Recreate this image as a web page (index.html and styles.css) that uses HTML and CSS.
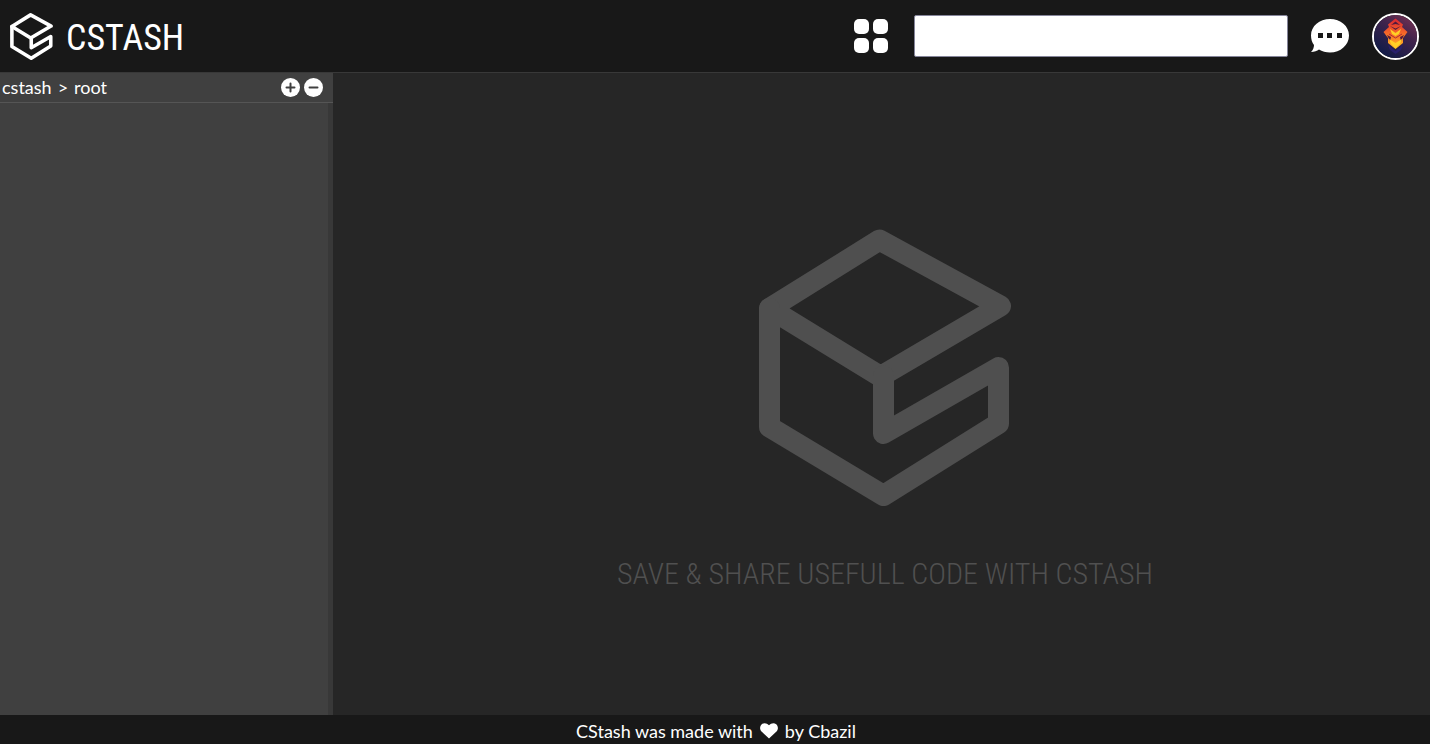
FILE: index.html
```html
<!DOCTYPE html>
<html lang="en">
<head>
<meta charset="utf-8">
<title>CStash</title>
<link rel="stylesheet" href="styles.css">
</head>
<body>
<svg class="sprite" aria-hidden="true">
  <symbol id="cube" viewBox="0 0 252 277">
    <g fill="none" stroke="currentColor" stroke-width="21" stroke-linecap="round" stroke-linejoin="round">
      <path d="M10.500 79.500L120.500 11L241.500 77L121.500 147.500Z"/>
      <path d="M10.500 79.500V198L124.500 266.500L239.500 194.500V138.500L124.500 204.500V147"/>
    </g>
  </symbol>
</svg>
<header class="topbar">
  <a class="brand" href="#">
    <svg class="brand-mark" aria-hidden="true"><use href="#cube"/></svg>
    <span class="brand-name">CSTASH</span>
  </a>
  <div class="tools">
    <button class="icon-button" type="button" aria-label="Categories">
      <svg width="40" height="40" viewBox="0 0 40 40" fill="currentColor"><rect x="3" y="3" width="15" height="15" rx="5"/><rect x="22" y="3" width="15" height="15" rx="5"/><rect x="3" y="22" width="15" height="15" rx="5"/><rect x="22" y="22" width="15" height="15" rx="5"/></svg>
    </button>
    <input class="search" type="search" aria-label="Search">
    <button class="icon-button" type="button" aria-label="Messages">
      <svg width="38" height="34" viewBox="0 0 38 34"><path fill="currentColor" d="M19 0C29.500 0 38 7 38 16.500S29.500 33.500 19 33.500C15 33.500 11 32.500 8 30.500C6 32 3.500 33 0 33C2 31 3 28.500 3 26C1 23.500 0 20 0 16.500C0 7 8.500 0 19 0Z"/><path fill="#181818" d="M7 14h5v5H7zM16 14h5v5h-5zM26 14h5v5h-5z"/></svg>
    </button>
    <button class="icon-button avatar" type="button" aria-label="Profile">
      <svg viewBox="0 0 43 43">
        <defs>
          <linearGradient id="sky" x1="1" y1="0" x2="0.300" y2="1"><stop offset="0" stop-color="#803454"/><stop offset="0.450" stop-color="#40244c"/><stop offset="1" stop-color="#101b48"/></linearGradient>
          <linearGradient id="fire" x1="0" y1="0" x2="0" y2="1"><stop offset="0" stop-color="#d92432"/><stop offset="0.500" stop-color="#f86a28"/><stop offset="1" stop-color="#ffc021"/></linearGradient>
        </defs>
        <rect width="43" height="43" fill="url(#sky)"/>
        <path fill="url(#fire)" d="M21.500 3.500L29 9.500L28 12L33.500 17L29 23V28L21.500 34L14 28V23L9.500 17L15 12L14 9.500Z"/>
        <path fill="#52193d" d="M21.500 6.500L26 10L21.500 9L17 10ZM16 11L21.500 13.500L27 11L21.500 15ZM13 20L17 22L16 26ZM30 20L26 22L27 26Z"/>
        <path fill="#ffcf27" d="M16 14L21.500 18L27 14L25 19L21.500 21L18 19ZM15 24L21.500 28L28 24L26 29L21.500 33L17 29Z"/>
        <path fill="none" stroke="#b02a35" stroke-width="1" d="M15 19L21.500 23L28 19"/>
        <path fill="#28206c" d="M14 30L21.500 36L29 30L27 35L21.500 39L16 35Z"/>
      </svg>
    </button>
  </div>
</header>
<div class="workspace">
  <aside class="sidebar">
    <div class="pathbar">
      <nav class="path" aria-label="Path"><span>cstash</span><span>&gt;</span><span>root</span></nav>
      <button class="round" type="button" aria-label="Add"><svg width="19" height="19" viewBox="0 0 19 19"><circle cx="9.500" cy="9.500" r="9.500" fill="#fff"/><path d="M9.500 5.500V13.500M5.500 9.500H13.500" stroke="#404040" stroke-width="2" stroke-linecap="round"/></svg></button>
      <button class="round" type="button" aria-label="Remove"><svg width="19" height="19" viewBox="0 0 19 19"><circle cx="9.500" cy="9.500" r="9.500" fill="#fff"/><path d="M5.500 9.500H13.500" stroke="#404040" stroke-width="2" stroke-linecap="round"/></svg></button>
    </div>
    <div class="tree"></div>
  </aside>
  <main class="stage">
    <svg class="stage-mark" aria-hidden="true"><use href="#cube"/></svg>
    <p class="tagline">SAVE &amp; SHARE USEFULL CODE WITH CSTASH</p>
  </main>
</div>
<footer class="footer">
  <span>CStash was made with</span>
  <svg width="18" height="16" viewBox="0 0 18 16" role="img" aria-label="love"><path fill="#fff" d="M9 15.500L1.500 8.500C-0.500 6.500-0.300 3 1.800 1.200C4 -0.600 7 0 9 2.300C11 0 14 -0.600 16.200 1.200C18.300 3 18.500 6.500 16.500 8.500Z"/></svg>
  <span>by Cbazil</span>
</footer>
</body>
</html>
```
FILE: styles.css
```css
* {
  box-sizing: border-box;
}

body {
  margin: 0;
  min-height: 100vh;
  display: flex;
  flex-direction: column;
  background: #262626;
  color: #fff;
  font: 18px/28px Lato, sans-serif;
}

button {
  padding: 0;
  border: 0;
  background: none;
  color: inherit;
  cursor: pointer;
}

svg {
  display: block;
}

.sprite {
  position: absolute;
  width: 0;
  height: 0;
}

.topbar {
  display: flex;
  align-items: center;
  justify-content: space-between;
  height: 73px;
  padding: 0 11px 0 10px;
  background: #181818;
  border-bottom: 1px solid #383838;
}

.brand {
  display: flex;
  align-items: center;
  gap: 13px;
  color: #fff;
  text-decoration: none;
}

.brand-mark {
  width: 43px;
  height: 47px;
}

.brand-name {
  padding-top: 4px;
  font: 400 36px/48px "Roboto Condensed", "Liberation Sans Narrow", Roboto, sans-serif;
}

.tools {
  display: flex;
  align-items: center;
  gap: 23px;
}

.search {
  width: 374px;
  height: 42px;
  padding: 0 10px;
  border: 1px solid #85859a;
  border-radius: 2px;
  background: #fff;
  font: inherit;
}

.avatar {
  width: 47px;
  height: 47px;
  border: 2px solid #fff;
  border-radius: 50%;
  overflow: hidden;
}

.workspace {
  flex: 1;
  display: flex;
}

.sidebar {
  width: 333px;
  display: flex;
  flex-direction: column;
  background: #404040;
}

.pathbar {
  display: flex;
  align-items: center;
  gap: 4px;
  height: 30px;
  padding: 0 10px 1px 2px;
  border-bottom: 1px solid #555;
}

.path {
  flex: 1;
  display: flex;
  gap: 6px;
}

.tree {
  flex: 1;
  border-right: 5px solid #383838;
}

.stage {
  flex: 1;
  display: flex;
  flex-direction: column;
  align-items: center;
  justify-content: center;
  gap: 48px;
  padding: 35px 0 0 7px;
}

.stage-mark {
  width: 252px;
  height: 277px;
  color: #4f4f4f;
}

.tagline {
  margin: 0;
  color: #505050;
  font: 300 30px/40px "Roboto Condensed", Roboto, sans-serif;
}

.footer {
  display: flex;
  align-items: center;
  justify-content: center;
  gap: 7px;
  height: 29px;
  padding: 2px 0 0 2px;
  background: #181818;
}
```
